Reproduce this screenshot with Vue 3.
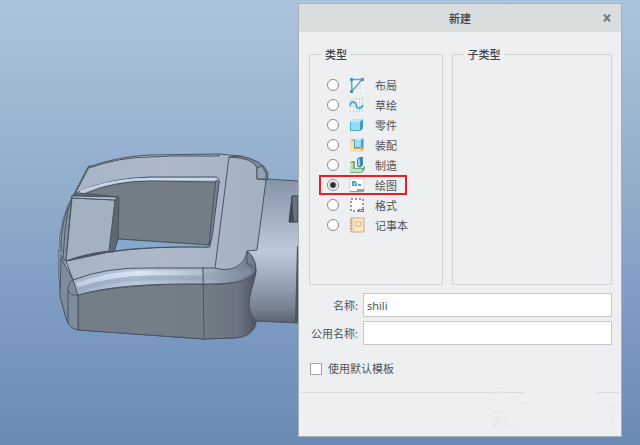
<template>
  <main class="workspace">
    <svg class="model" viewBox="0 0 298 434" preserveAspectRatio="xMinYMin meet" aria-hidden="true">
      <defs>
        <linearGradient id="shaft" x1="0" y1="0" x2="0" y2="1">
          <stop offset="0" stop-color="#8594a6" />
          <stop offset="0.12" stop-color="#92a1b3" />
          <stop offset="0.5" stop-color="#bccadb" />
          <stop offset="0.62" stop-color="#a9b7c8" />
          <stop offset="0.9" stop-color="#75818f" />
          <stop offset="1" stop-color="#59636f" />
        </linearGradient>
        <linearGradient id="face" x1="0" y1="0" x2="1" y2="0">
          <stop offset="0" stop-color="#a6b4c6" />
          <stop offset="0.5" stop-color="#adb9cb" />
          <stop offset="1" stop-color="#a2b1c2" />
        </linearGradient>
        <linearGradient id="front" x1="0" y1="0" x2="1" y2="0">
          <stop offset="0" stop-color="#727e88" />
          <stop offset="0.7" stop-color="#727d88" />
          <stop offset="0.9" stop-color="#6b7480" />
          <stop offset="1" stop-color="#4c5460" />
        </linearGradient>
        <linearGradient id="rim" x1="0" y1="0" x2="1" y2="0">
          <stop offset="0" stop-color="#a3b3c7" />
          <stop offset="0.35" stop-color="#b9c9dd" />
          <stop offset="0.75" stop-color="#a0aec0" />
          <stop offset="1" stop-color="#6c7887" />
        </linearGradient>
        <linearGradient id="shine" x1="0" y1="0" x2="1" y2="0">
          <stop offset="0" stop-color="#c3d4ea" />
          <stop offset="0.5" stop-color="#e2effd" />
          <stop offset="1" stop-color="#b4c3d5" />
        </linearGradient>
      </defs>
      <g transform="translate(0 -3)">
        <!-- shaft -->
        <path d="M248 179 L298 181 V323 L248 321Z" fill="url(#shaft)" />
        <path d="M266 179 L298 181 M255 321 L298 323" class="edge" />
        <path d="M292 196 H298 V222 H289Z" fill="#69747f" stroke="#343c47" />
        <path d="M289 222 L292 196 L294 222Z" fill="#414a55" />
        <path d="M297 246 L295 323 H298 V246Z" fill="#4c5661" />
        <!-- outer shell -->
        <path
          d="M88 167 Q120 156 150 155 L219 154 L240 156 Q259 160 266 171 L268 179 L266 180 L257 250 L247 251 Q256 260 256 272 C254 284 249 293 249 305 C249 313 253 317 256 322 C255 332 246 338 232 338 L204 339 L80 330 Q71 328 68 323 C60 301 58 280 59 252 Q60 216 73 196Z"
          fill="url(#face)"
          class="edge"
        />
        <path d="M59 252 Q60 216 73 196 L65 261 L68 323 Q57 290 59 252Z" fill="#8492a4" />
        <path d="M72 198 Q60 222 61 252 M69 205 Q64 230 63 258" class="edge" />
        <!-- front walls and rounded rim -->
        <path
          d="M78 295 Q118 284 203 284 C234 285 248 281 256 269 C254 284 249 293 249 305 C249 313 253 317 256 322 C255 332 246 338 232 338 L204 339 L78 330Z"
          fill="url(#front)"
          class="edge"
        />
        <path d="M61 258 L73 280 L78 295 V330 Q69 328 67 321 L60 297Z" fill="#7e8c9d" class="edge" />
        <path d="M68 290 V323" class="edge" />
        <path
          d="M73 280 Q105 267 150 268 H215 C232 273 245 265 247 251 C255 257 257 267 255 272 C246 283 230 284 203 284 Q118 283 78 295Z"
          fill="url(#rim)"
          class="edge"
        />
        <path d="M76 290 Q112 277 150 277 H210 Q238 278 250 270" fill="none" stroke="#909eb0" stroke-width="7" opacity="0.4" />
        <path d="M77 285 Q112 273 150 273 H202" fill="none" stroke="url(#shine)" stroke-width="5" opacity="0.8" />
        <path d="M60 255 L66 261 L73 280 Q68 283 68 290" class="edge" />
        <path d="M68 290 Q70 296 78 295" class="edge" />
        <path d="M246 263 Q254 266 256 272 M247 251 V263" class="edge" />
        <path d="M203 267 L204 339" class="edge" />
        <!-- window through the face -->
        <path d="M78 192 Q110 178 150 177 H216 Q220 178 219 183 L210 247 Q150 246 109 252 L66 261 L72 196Z" fill="#b2bfd0" class="edge" />
        <path d="M84 194 Q114 181 150 181 L216 182 L209 245 L118 239 V197Z" fill="#727d86" class="edge" />
        <path d="M80 192 Q112 179 150 179 H217" fill="none" stroke="#cbd9ea" stroke-width="2" />
        <path d="M118 239 L209 245 L208 247 Q150 246 114 251Z" fill="#89a8cf" class="edge" />
        <path d="M216 180 L214 196 L209 245 L212 238 L219 182Z" fill="#77838f" class="edge" />
        <path d="M72 196 L79 193 L119 197 L118 239 L114 252 L108 252 L66 261Z" fill="#5d6874" class="edge" />
        <path d="M72 198 L115 200 L109 251 Q84 254 66 261Z" fill="#a3b2c3" class="edge" />
        <path d="M72 196 L116 197 V200 L72 198Z" fill="#b4c2d3" class="edge" />
        <path d="M66 261 Q95 252 113 251" class="edge" />
        <!-- seams -->
        <path d="M229 157 L215 268 M90 165 L74 196" class="edge" />
        <path d="M89 168 Q120 157 150 157 L172 156 H219 V154" class="edge" />
        <path d="M229 157 Q254 158 257 168 V179 L267 180 L268 173 Q263 160 240 156Z" fill="#7d8998" class="edge" />
        <path d="M257 168 L262 166 L266 173 V179 H257Z" fill="#94a2b2" class="edge" />
      </g>
    </svg>

    <section class="dialog" role="dialog" aria-labelledby="dialog-title">
      <header class="titlebar">
        <h1 id="dialog-title">新建</h1>
        <button type="button" class="close" aria-label="关闭">
          <svg width="8" height="8" viewBox="0 0 8 8">
            <path d="M1 0.5 L7 7.5 M7 0.5 L1 7.5" stroke="#75797b" stroke-width="2" />
          </svg>
        </button>
      </header>

      <form class="content" @submit.prevent>
        <div class="groups">
          <fieldset>
            <legend>类型</legend>
            <div class="types">
              <label
                v-for="item in types"
                :key="item.id"
                class="type"
                :class="{ marked: item.id === 'drawing' }"
              >
                <input v-model="selected" type="radio" name="type" :value="item.id" />
                <svg class="icon" viewBox="0 0 16 16">
                  <g v-if="item.id === 'layout'" fill="none">
                    <path d="M2 2 H15 V15 H2Z" fill="#fafbfb" />
                    <path d="M8 8 V15 M11 5 V15 M5 11 H15 M8 8 H15" stroke="#dadddf" />
                    <path d="M2.500 2.500 H13 L3 14Z" stroke="#5fa3c6" stroke-width="1.500" />
                    <path d="M1 1 H4 V4 H1Z M12 1 H15 V4 H12Z M1 13 H4 V16 H1Z" fill="#4a92ba" />
                  </g>
                  <g v-else-if="item.id === 'sketch'" fill="none">
                    <path
                      d="M1 2 H14 M1 6 H14 M1 10 H14 M1 14 H14"
                      stroke="#a3a7aa"
                      stroke-dasharray="1 2"
                    />
                    <path d="M1 9 C2 3 6 4 7 8 S11 13 14 8" stroke="#45b2e0" stroke-width="2" />
                  </g>
                  <g v-else-if="item.id === 'part'">
                    <path d="M1 5 L4 2 H14 V11 L11 14 H1Z" fill="#4babd0" />
                    <path d="M1 5 L4 2 H14 L11 5Z" fill="#bceafa" />
                    <path d="M2 5 H11 V13 H2Z" fill="#93dcf4" />
                    <path d="M11 5 L14 2 V11 L11 14Z" fill="#4299bd" />
                  </g>
                  <g v-else-if="item.id === 'assembly'">
                    <path d="M1 4 L3 2 H15 V12 L12 15 H1Z" fill="#dcb36c" />
                    <path d="M1 4 H5 V12 H12 V15 H1Z" fill="#fae0ac" />
                    <path d="M5 3 L7 1 H14 V9 L12 11 H5Z" fill="#4f9dbd" />
                    <path d="M5 3 L7 1 H14 L12 3Z" fill="#c6eefb" />
                    <path d="M6 3 H12 V10 H6Z" fill="#9de0f5" />
                  </g>
                  <g v-else-if="item.id === 'manufacturing'">
                    <path d="M1 6 L3 4 H6 V11 H13 L16 9 V12 L13 16 H1Z" fill="#78ab80" />
                    <path d="M1 6 H4 V12 H13 V15 H1Z" fill="#c1e4b8" />
                    <path d="M8 2 L11 0 H14 V8 L11 11 L8 9Z" fill="#3c8aab" />
                    <path d="M9 2 H11 V9 H9Z" fill="#8dd4ea" />
                  </g>
                  <g v-else-if="item.id === 'drawing'">
                    <path d="M1 2 H15 V15 H1Z" fill="#fff" stroke="#d0d3d5" />
                    <path d="M3 4 H7 V6 H8 V9 H3Z M9 7 H12 V9 H9Z" fill="#46a7d0" />
                    <path d="M5 6 H6 V8 H5Z" fill="#fff" />
                    <path d="M1 14 H15 V15 H1Z M8 12 H15 V14 H8Z" fill="#9da2a5" />
                  </g>
                  <g v-else-if="item.id === 'format'">
                    <path
                      d="M2 2 H14 V14 H2Z"
                      fill="#fcfcfc"
                      stroke="#777b7e"
                      stroke-width="1.500"
                      stroke-dasharray="2 2"
                    />
                    <path d="M9 12 H15 V15 H9Z" fill="#84888b" />
                    <path d="M11 13 H12 V14 H11Z M13 13 H14 V14 H13Z" fill="#fff" />
                  </g>
                  <g v-else>
                    <path d="M2 1 H15 V15 H2Z" fill="#fae6c4" stroke="#c6ac87" />
                    <path d="M4 1 V15" stroke="#e2c79d" />
                    <path d="M7 5 H12 V9 H7Z" fill="#fff7e6" stroke="#dbab66" />
                    <path d="M1 3 H3 M1 6 H3 M1 9 H3 M1 12 H3" stroke="#a8967b" />
                  </g>
                </svg>
                <span>{{ item.label }}</span>
              </label>
            </div>
          </fieldset>
          <fieldset>
            <legend>子类型</legend>
          </fieldset>
        </div>

        <div class="fields">
          <label for="name">名称:</label>
          <input id="name" v-model="name" type="text" />
          <label for="common-name">公用名称:</label>
          <input id="common-name" v-model="commonName" type="text" />
        </div>

        <label class="template">
          <input v-model="useTemplate" type="checkbox" />
          <span>使用默认模板</span>
        </label>
      </form>

      <footer class="footer">
        <!-- worn patch over the footer line -->
        <svg class="patch" width="134" height="42" viewBox="0 0 134 42" aria-hidden="true">
          <path d="M38 0 H110 V4 H38Z" fill="#eeeff1" />
          <g fill="none" stroke="#e0e2e3">
            <path d="M4 4 L7 1 H17 M32 3 L37 1 M35 12 H41 M5 21 H15" />
            <path d="M6 26 V37 M10 26 L8 36 M13 27 V35 M18 28 L21 36 M24 34 L27 37" />
            <path d="M113 6 L116 8 M124 14 L129 16 M127 20 V23 M123 28 L128 25 M126 31 V34" />
          </g>
        </svg>
      </footer>
    </section>
  </main>
</template>

<script setup>
import { ref } from "vue";

const types = [
  { id: "layout", label: "布局" },
  { id: "sketch", label: "草绘" },
  { id: "part", label: "零件" },
  { id: "assembly", label: "装配" },
  { id: "manufacturing", label: "制造" },
  { id: "drawing", label: "绘图" },
  { id: "format", label: "格式" },
  { id: "notebook", label: "记事本" },
];

const selected = ref("drawing");
const name = ref("shili");
const commonName = ref("");
const useTemplate = ref(false);
</script>

<style>
body {
  margin: 0;
}
</style>

<style scoped>
* {
  box-sizing: border-box;
}

.workspace {
  display: grid;
  grid-template-columns: minmax(0, 149fr) minmax(0, 162fr);
  min-height: 100vh;
  padding: 3px 18px 8px 0;
  background: linear-gradient(#acc3dd 0%, #8faccb 45%, #7f9dc5 67%, #6a8ab3 100%);
  color: #505356;
  font-family: "Noto Sans", "Noto Sans CJK SC", sans-serif;
  font-size: 11px;
  line-height: 15px;
}

.model {
  display: block;
  width: 100%;
}

.edge {
  stroke: #4a5460;
  stroke-width: 1;
}

.edge:not([fill]) {
  fill: none;
}

.dialog {
  display: flex;
  flex-direction: column;
  border: 1px solid #abb0b2;
  background: #eeeff1;
}

.titlebar {
  display: flex;
  position: relative;
  align-items: center;
  justify-content: center;
  height: 28px;
  background: #d9dddd;
}

.titlebar h1 {
  margin: 0;
  color: #3f4244;
  font-size: 11px;
  font-weight: 500;
}

.close {
  display: flex;
  position: absolute;
  right: 6px;
  padding: 4px;
  border: 0;
  background: none;
}

.content {
  padding: 15px 9px 16px 10px;
}

.groups {
  display: grid;
  grid-template-columns: minmax(0, 134fr) minmax(0, 161fr);
  gap: 9px;
}

fieldset {
  min-width: 0;
  margin: 0;
  padding: 0 0 49px 11px;
  border: 1px solid #d2d5d6;
}

legend {
  padding: 0 4px;
  color: #3f4244;
  font-weight: 500;
}

.types {
  display: flex;
  flex-direction: column;
  align-items: flex-start;
  padding: 13px 0 0 6px;
}

.type {
  display: flex;
  position: relative;
  align-items: center;
  height: 20px;
}

.marked::after {
  position: absolute;
  inset: 0 -10px 0 -8px;
  border: 2px solid #eb1d27;
  content: "";
  pointer-events: none;
}

.type input {
  width: 12px;
  height: 12px;
  margin: 0 10px 0 0;
  border: 1px solid #86898b;
  border-radius: 50%;
  background: #fff;
  appearance: none;
}

.type input:checked {
  background: radial-gradient(circle, #292b2d 0 2px, #fff 4px);
}

.icon {
  width: 16px;
  height: 16px;
  margin-right: 10px;
}

.fields {
  display: grid;
  grid-template-columns: auto minmax(0, 1fr);
  align-items: center;
  gap: 4px 5px;
  margin-top: 8px;
  padding-left: 2px;
}

.fields label {
  text-align: right;
}

.fields input {
  width: 100%;
  height: 24px;
  padding: 0 3px;
  border: 1px solid #c5c9ca;
  border-radius: 0;
  background: #fff;
  color: #505356;
  font: inherit;
}

.template {
  display: flex;
  align-items: center;
  gap: 6px;
  margin-top: 16px;
}

.template input {
  width: 12px;
  height: 12px;
  margin: 0 0 0 1px;
  border: 1px solid #a1a5a7;
  background: #fff;
  appearance: none;
}

.footer {
  position: relative;
  flex: 1;
  min-height: 43px;
  border-top: 1px solid #dadddf;
}

.patch {
  position: absolute;
  top: -2px;
  right: 0;
}
</style>
